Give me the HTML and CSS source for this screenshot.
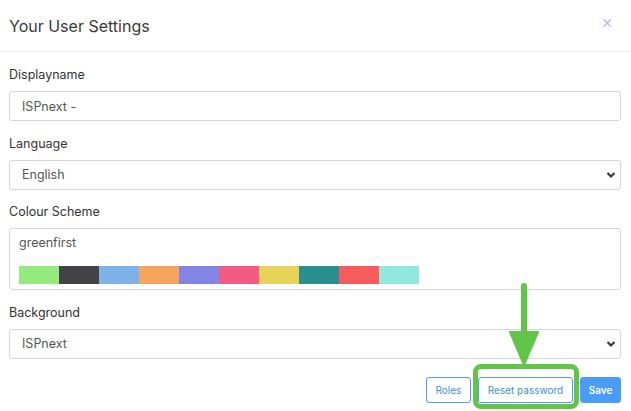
FILE: index.html
```html
<!DOCTYPE html>
<html>
<head>
    <meta charset="utf-8">
    <link rel="stylesheet" href="styles.css">
</head>
<body>
    <div class="modal">
        <div class="modal-header">
            <div class="modal-title">Your User Settings</div>
            <span class="close">×</span>
        </div>
        <div class="modal-body">
            <div class="field">
                <label>Displayname</label>
                <input class="control" type="text" value="ISPnext -">
            </div>
            <div class="field">
                <label>Language</label>
                <div class="select-wrap">
                    <select class="control"><option>English</option></select>
                    <svg class="chevron" width="10" height="8" viewBox="0 0 10 8"><path d="M1.5 2 L5 5.5 L8.5 2" fill="none" stroke="#3a3a3a" stroke-width="2.2"/></svg>
                </div>
            </div>
            <div class="field">
                <label>Colour Scheme</label>
                <div class="scheme-box">
                    <div class="scheme-name">greenfirst</div>
                    <div class="swatches">
                        <span style="background:#93ec7d"></span>
                        <span style="background:#434247"></span>
                        <span style="background:#7eb3ea"></span>
                        <span style="background:#f6a55e"></span>
                        <span style="background:#8285e6"></span>
                        <span style="background:#f25c84"></span>
                        <span style="background:#e5d457"></span>
                        <span style="background:#2c8f8f"></span>
                        <span style="background:#f65c5b"></span>
                        <span style="background:#92e7df"></span>
                    </div>
                </div>
            </div>
            <div class="field">
                <label>Background</label>
                <div class="select-wrap">
                    <select class="control"><option>ISPnext</option></select>
                    <svg class="chevron" width="10" height="8" viewBox="0 0 10 8"><path d="M1.5 2 L5 5.5 L8.5 2" fill="none" stroke="#3a3a3a" stroke-width="2.2"/></svg>
                </div>
            </div>
        </div>
        <div class="modal-footer">
            <button class="btn btn-outline btn-roles">Roles</button>
            <div class="highlight-wrap">
                <button class="btn btn-outline btn-reset">Reset password</button>
                <div class="highlight"></div>
                <svg class="arrow" width="34" height="84" viewBox="0 0 34 84">
                    <line x1="17" y1="3" x2="17" y2="52" stroke="#62c448" stroke-width="6" stroke-linecap="round"/>
                    <path d="M3 49 L31 49 L17 82 Z" fill="#62c448" stroke="#62c448" stroke-width="2" stroke-linejoin="round"/>
                </svg>
            </div>
            <button class="btn btn-primary">Save</button>
        </div>
    </div>
</body>
</html>
```

FILE: styles.css
```css
* {
    margin: 0;
    padding: 0;
    box-sizing: border-box;
}

body {
    background: #fff;
    font-family: Inter, "Noto Sans", sans-serif;
    color: #333;
}

.modal {
    width: 631px;
    height: 411px;
    overflow: hidden;
}

.modal-header {
    height: 52px;
    display: flex;
    justify-content: space-between;
    align-items: flex-start;
    padding: 14px 18px 0 9px;
    border-bottom: 1px solid #e6e6e6;
}

.modal-title {
    font-size: 16px;
    line-height: 24px;
    font-weight: 400;
    color: #3a3a3a;
}

.close {
    color: #a9c9f2;
    font-size: 18px;
    line-height: 12px;
    margin-top: 2px;
}

.modal-body {
    padding: 14px 10px 0 9px;
}

.field {
    margin-bottom: 13.5px;
}

.field label {
    display: block;
    font-size: 12.5px;
    line-height: 18px;
    margin-bottom: 7px;
    color: #333;
}

.control {
    display: block;
    width: 100%;
    height: 30px;
    border: 1px solid #d3d5da;
    border-radius: 3px;
    padding: 0 12px;
    font-family: inherit;
    font-size: 12.5px;
    color: #555;
    background: #fff;
    appearance: none;
    -webkit-appearance: none;
    outline: none;
}

.select-wrap {
    position: relative;
}

.chevron {
    position: absolute;
    right: 5px;
    top: 11px;
}

.scheme-box {
    height: 62px;
    border: 1px solid #d3d5da;
    border-radius: 3px;
    padding: 5px 9px 0 9px;
}

.scheme-name {
    font-size: 12.5px;
    line-height: 17px;
    color: #555;
    margin-bottom: 15px;
}

.swatches {
    display: flex;
}

.swatches span {
    width: 40px;
    height: 18px;
}

.modal-footer {
    display: flex;
    justify-content: flex-end;
    align-items: center;
    gap: 7px;
    padding: 5px 10px 0 0;
}

.btn {
    height: 26px;
    border-radius: 3px;
    font-family: inherit;
    font-size: 10px;
    white-space: nowrap;
    text-align: center;
    cursor: pointer;
}

.btn-outline {
    background: #fff;
    color: #3d8ee0;
    border: 1px solid #4e9af0;
}

.btn-roles {
    width: 45px;
}

.btn-primary {
    width: 41px;
    background: #4a9cf6;
    color: #fff;
    border: 1px solid #4a9cf6;
    font-weight: 600;
}

.highlight-wrap {
    position: relative;
}

.highlight-wrap .btn-reset {
    display: block;
    width: 95px;
}

.highlight {
    position: absolute;
    left: -5px;
    right: -6px;
    top: -13px;
    bottom: -6px;
    border: 5px solid #62c448;
    border-radius: 8px;
    pointer-events: none;
}

.arrow {
    position: absolute;
    left: 29px;
    top: -94px;
}
```
